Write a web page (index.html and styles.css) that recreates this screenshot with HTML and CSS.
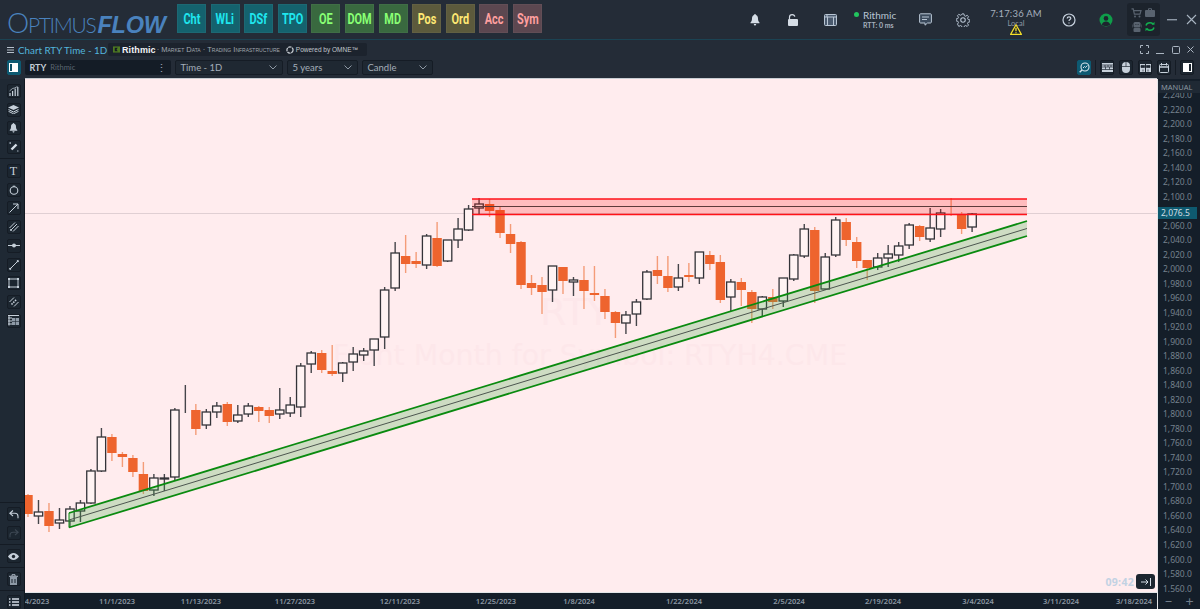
FILE: index.html
```html
<!DOCTYPE html>
<html lang="en">
<head>
  <meta charset="UTF-8" />
  <title>OptimusFlow - Chart RTY</title>
  <link rel="stylesheet" href="styles.css">
</head>
<body>
  <svg class="sprites" width="0" height="0">
    <symbol id="i-cog" viewBox="0 0 16 16">
      <circle cx="8" cy="8" r="2.6" fill="none" stroke="currentColor" stroke-width="1.2"/>
      <path d="M6.9 1h2.2l.4 2 1.5.7 1.8-1.1 1.5 1.6-1.1 1.7.7 1.6 2 .4v2.2l-2 .4-.7 1.6 1.1 1.7-1.5 1.6-1.8-1.1-1.5.7-.4 2H6.900l-.4-2-1.500-.7-1.800 1.100L1.700 12.700l1.100-1.700-.7-1.600-2-.4V6.800l2-.4.7-1.600-1.100-1.700 1.500-1.600 1.800 1.100 1.500-.7z" fill="none" stroke="currentColor" stroke-width="1.100"/>
    </symbol>
  </svg>

  <header class="topbar">
    <div class="logo"><span class="logo-thin"><span class="logo-o">O</span>PTIMUS</span><span class="logo-bold">FLOW</span></div>
    <nav class="modules">
      <a class="mod mod-teal"><span>Cht</span></a>
      <a class="mod mod-teal"><span>WLi</span></a>
      <a class="mod mod-teal"><span>DSf</span></a>
      <a class="mod mod-teal"><span>TPO</span></a>
      <a class="mod mod-green"><span>OE</span></a>
      <a class="mod mod-green"><span>DOM</span></a>
      <a class="mod mod-green"><span>MD</span></a>
      <a class="mod mod-yellow"><span>Pos</span></a>
      <a class="mod mod-yellow"><span>Ord</span></a>
      <a class="mod mod-red"><span>Acc</span></a>
      <a class="mod mod-red"><span>Sym</span></a>
    </nav>
    <div class="status">
      <div class="stat">
        <svg width="10" height="12" viewBox="0 0 10 12"><path d="M5 0c.6 0 .9.400.9 1C7.600 1.500 8 3 8 4.500c0 2 .6 3.200 1.500 4v.8h-9v-.8C1.400 7.700 2 6.500 2 4.500 2 3 2.400 1.500 4.100 1c0-.6.300-1 .9-1zM3.800 10h2.400c0 .8-.5 1.500-1.200 1.500S3.800 10.800 3.800 10z" fill="#d5dde6"/></svg>
      </div>
      <div class="stat">
        <svg width="12" height="12" viewBox="0 0 12 12"><path d="M2.500 5V3.200C2.500 1.500 3.800.6 5.200.6c1.300 0 2.400.8 2.600 2.100" fill="none" stroke="#d5dde6" stroke-width="1.200"/><rect x="1" y="5" width="10" height="7" rx="1" fill="#d5dde6"/></svg>
      </div>
      <div class="stat">
        <svg width="13" height="12" viewBox="0 0 13 12"><rect x=".5" y=".5" width="12" height="11" rx="1" fill="#4a5a6e" stroke="#b9c6d4"/><path d="M.5 3h12M3 .5V3M3.500 3v8.500M9.500 3v8.500" stroke="#b9c6d4" fill="none"/></svg>
      </div>
      <div class="stat stat-feed">
        <span class="feed-name"><i class="dot"></i>Rithmic</span>
        <span class="feed-rtt">RTT: 0 ms</span>
      </div>
      <div class="stat">
        <svg width="13" height="13" viewBox="0 0 13 13"><path d="M1.500.8h10c.5 0 .9.400.9.900v7.400c0 .5-.4.900-.9.900H8.500L6 12.200V10H1.500c-.5 0-.9-.4-.9-.9V1.700c0-.5.400-.9.900-.9z" fill="#3b4a5c" stroke="#b9c6d4"/><path d="M3 4h7M3 6.500h5" stroke="#b9c6d4"/></svg>
      </div>
      <div class="stat icon-cog">
        <svg width="14" height="14"><use href="#i-cog"/></svg>
      </div>
      <div class="stat stat-clock">
        <span class="clock-time">7:17:36 AM</span>
        <span class="clock-zone">Local</span>
        <svg class="clock-warn" width="12" height="11" viewBox="0 0 12 11"><path d="M6 .8l5.400 9.600H.6z" fill="#1d242e" stroke="#f5e02a" stroke-width="1.200" stroke-linejoin="round"/><path d="M6 3.800v3.500M6 8.200v1" stroke="#f5e02a" stroke-width="1.300"/></svg>
      </div>
      <div class="stat">
        <svg width="14" height="14" viewBox="0 0 14 14"><circle cx="7" cy="7" r="6" fill="none" stroke="#c7d2de" stroke-width="1.200"/><path d="M5.200 5.400c0-1 .8-1.600 1.800-1.600s1.800.6 1.800 1.500c0 1.300-1.800 1.300-1.800 2.800M7 9.400v1.100" fill="none" stroke="#c7d2de" stroke-width="1.200"/></svg>
      </div>
      <div class="stat">
        <svg width="14" height="14" viewBox="0 0 14 14"><circle cx="7" cy="7" r="6.500" fill="#0f9d4a"/><circle cx="7" cy="5.400" r="2.300" fill="#1d242e"/><path d="M2.800 11.400c.7-2 2.300-3 4.200-3s3.500 1 4.200 3c-1 1-2.600 1.600-4.200 1.600s-3.200-.6-4.200-1.600z" fill="#1d242e"/></svg>
      </div>
      <div class="tray">
        <svg width="11" height="10" viewBox="0 0 11 10"><path d="M.5.800h1.700l1.200 5.400h5.600l1-3.600H3" fill="none" stroke="#59636f" stroke-width="1.200"/><circle cx="4" cy="8.600" r="1" fill="#59636f"/><circle cx="8.500" cy="8.600" r="1" fill="#59636f"/></svg>
        <svg width="10" height="9" viewBox="0 0 10 9"><path d="M3.500 2V.7h3V2" fill="none" stroke="#59636f"/><rect y="2" width="10" height="7" rx="1" fill="#59636f"/></svg>
        <svg width="10" height="11" viewBox="0 0 10 11"><rect x="1.500" y="1" width="7" height="5.500" rx="1.500" fill="#59636f"/><rect x="1.500" y="7" width="7" height="4" rx="1" fill="#59636f"/><path d="M0 3.500v3M10 3.500v3" stroke="#59636f"/><path d="M3.500 3.500h.8M5.700 3.500h.8" stroke="#1d242e"/></svg>
        <svg width="10" height="11" viewBox="0 0 10 11"><path d="M1 4.500C1.500 2.700 3 1.800 5 1.800c1.200 0 2.200.4 3 1.100M9 6.500C8.500 8.300 7 9.200 5 9.200c-1.200 0-2.200-.4-3-1.100" fill="none" stroke="#12b04f" stroke-width="1.400"/><path d="M9.500 .8v3H6.500zM.5 10.200v-3h3z" fill="#12b04f"/></svg>
      </div>
      <div class="win-btn">
        <svg width="10" height="2"><rect width="10" height="1.400" fill="#8d98a5"/></svg>
      </div>
      <div class="win-btn">
        <svg width="11" height="11" viewBox="0 0 11 11"><path d="M1 1l9 9M10 1l-9 9" stroke="#a9b5c2" stroke-width="1.100"/></svg>
      </div>
    </div>
  </header>

  <main class="panel">
    <div class="panel-title">
      <svg class="burger" width="7" height="6" viewBox="0 0 7 6"><path d="M0 .5h7M0 3h7M0 5.500h7" stroke="#b6c0cb"/></svg>
      <span class="title-text">Chart RTY Time - 1D</span>
      <div class="banner">
        <svg width="7" height="7" viewBox="0 0 8 7"><rect width="8" height="7" fill="#4e7a22"/><path d="M2 1.500h3.500L4 3.500l1.500 2H2z" fill="#141b23"/></svg>
        <span class="banner-name">Rithmic</span>
        <span class="banner-tag">· Market Data · Trading Infrastructure</span>
        <svg class="banner-ring" width="8" height="8" viewBox="0 0 7 7"><circle cx="3.500" cy="3.500" r="2.700" fill="none" stroke="#c9ced4" stroke-width="1.100" stroke-dasharray="3 .6"/></svg>
        <span class="banner-omne">Powered by OMNE™</span>
      </div>
      <div class="panel-win">
        <svg width="9" height="9" viewBox="0 0 9 9"><path d="M.5 3V.5H3M6 .5h2.500V3M8.500 6v2.500H6M3 8.500H.5V6" fill="none" stroke="#aab5c1"/></svg>
        <svg width="8" height="9" viewBox="0 0 8 9"><path d="M0 8.500h8" stroke="#aab5c1"/></svg>
        <svg width="8" height="8" viewBox="0 0 8 8"><rect x=".5" y=".5" width="7" height="7" rx="1" fill="none" stroke="#aab5c1"/></svg>
        <svg width="7" height="7" viewBox="0 0 7 7"><path d="M.5.500l6 6M6.500.500l-6 6" stroke="#aab5c1"/></svg>
      </div>
    </div>

    <div class="toolbar">
      <button class="tool tool-active side-toggle"><svg width="9" height="9" viewBox="0 0 9 9"><rect x=".5" y=".5" width="8" height="8" fill="#0d4f66" stroke="#fff"/><rect x="3" y="1" width="5" height="7" fill="#fff"/></svg></button>
      <div class="symbol"><b>RTY</b><span>Rithmic</span><em>⋮</em></div>
      <div class="select select-time">Time - 1D<svg width="8" height="5" viewBox="0 0 8 5"><path d="M.5.500L4 4 7.500.500" fill="none" stroke="#8e99a5"/></svg></div>
      <div class="select select-range">5 years<svg width="8" height="5" viewBox="0 0 8 5"><path d="M.5.500L4 4 7.500.500" fill="none" stroke="#8e99a5"/></svg></div>
      <div class="select select-type">Candle<svg width="8" height="5" viewBox="0 0 8 5"><path d="M.5.500L4 4 7.500.500" fill="none" stroke="#8e99a5"/></svg></div>
      <div class="toolbar-right">
        <button class="tool tool-active"><svg width="11" height="11" viewBox="0 0 11 11"><circle cx="6" cy="5" r="4" fill="none" stroke="#d9e4ec" stroke-width="1.100"/><path d="M3 8L.7 10.300" stroke="#d9e4ec" stroke-width="1.400"/><path d="M4 6l1.500-1.500 1 1L8.300 3.500" fill="none" stroke="#d9e4ec"/></svg></button>
        <span class="tool-sep"></span>
        <button class="tool"><svg width="11" height="9" viewBox="0 0 11 9"><rect width="11" height="9" fill="#c6d0da"/><path d="M0 2h11M0 4h11M0 6.500h11M3 2v2M6 2v2M9 2v2M3.500 4v2.500M7.500 4v2.500" stroke="#1d2630" stroke-width=".7"/></svg></button>
        <button class="tool"><svg width="8" height="11" viewBox="0 0 8 11"><rect width="8" height="11" rx="4" fill="#c6d0da"/><path d="M0 4.500h8M4 0v4.500" stroke="#1d2630" stroke-width=".7"/></svg></button>
        <button class="tool"><svg width="11" height="8" viewBox="0 0 11 8"><rect width="11" height="8" fill="#c6d0da"/><path d="M1 1.500h3.500v2H1zM6.500 1.500H10v2H6.500zM3 5.500v2M8 5.500v2" stroke="#1d2630" fill="#1d2630" stroke-width=".7"/><path d="M5.500 0v8" stroke="#1d2630"/></svg></button>
        <button class="tool"><svg width="10" height="10" viewBox="0 0 10 10"><rect x=".5" y="1.500" width="9" height="8" rx="1" fill="none" stroke="#c6d0da"/><path d="M.5 4h9" stroke="#c6d0da" stroke-width="1.500"/><path d="M2.500 0v2.500M7.500 0v2.500" stroke="#c6d0da"/></svg></button>
        <span class="tool-sep"></span>
        <button class="tool"><svg width="9" height="9" viewBox="0 0 9 9"><rect x=".5" y=".5" width="8" height="8" fill="none" stroke="#fff"/><rect x="1" y="1" width="5" height="7" fill="#fff"/></svg></button>
      </div>
    </div>

    <div class="workspace">
      <aside class="sidebar">
        <div class="side-group">
          <button class="tool"><svg width="10" height="10" viewBox="0 0 10 10"><path d="M1 10V7M3.600 10V5M6.200 10V2.500M8.800 10V1" stroke="#c6d0da" stroke-width="1.200"/><path d="M.5 5l3-2.500 2-.5 3-1.500" fill="none" stroke="#c6d0da" stroke-width=".7"/></svg></button>
          <button class="tool"><svg width="11" height="9" viewBox="0 0 11 9"><path d="M5.500 0L11 2.500 5.500 5 0 2.500z" fill="#c6d0da"/><path d="M.5 4.500L5.500 7l5-2.500M.5 6.300L5.500 8.800l5-2.500" fill="none" stroke="#c6d0da"/></svg></button>
          <button class="tool"><svg width="9" height="10" viewBox="0 0 10 12"><path d="M5 0c.6 0 .9.400.9 1C7.600 1.500 8 3 8 4.500c0 2 .6 3.200 1.500 4v.8h-9v-.8C1.400 7.700 2 6.500 2 4.500 2 3 2.400 1.500 4.100 1c0-.6.300-1 .9-1zM3.800 10h2.400c0 .8-.5 1.500-1.200 1.500S3.800 10.800 3.800 10z" fill="#c6d0da"/></svg></button>
          <button class="tool"><svg width="10" height="10" viewBox="0 0 10 10"><path d="M2.500 7.500L7.500 2.500" stroke="#d5dde6" stroke-width="2.400"/><path d="M.5 1h1.500M1.200.3v1.500M8 9h1.500" stroke="#aab5c1"/></svg></button>
        </div>
        <div class="side-group side-draw">
          <button class="tool"><span class="tool-t">T</span></button>
          <button class="tool"><svg width="10" height="10" viewBox="0 0 10 10"><circle cx="5" cy="5.500" r="3.800" fill="none" stroke="#c6d0da" stroke-width="1.100"/><path d="M3.800 1.200h2.400" stroke="#c6d0da"/></svg></button>
          <button class="tool"><svg width="10" height="10" viewBox="0 0 10 10"><path d="M.5 9.500L9 1M4 1h5v5" fill="none" stroke="#c6d0da"/></svg></button>
          <button class="tool"><svg width="10" height="10" viewBox="0 0 10 10"><path d="M.5 6L6 .5M2 8L8 2M4 9.500L9.500 4" stroke="#c6d0da"/><circle cx="2" cy="8" r="1" fill="#c6d0da"/></svg></button>
          <button class="tool"><svg width="12" height="5" viewBox="0 0 12 5"><path d="M0 2.500h12" stroke="#c6d0da"/><circle cx="6" cy="2.500" r="2" fill="#c6d0da"/></svg></button>
          <button class="tool"><svg width="10" height="10" viewBox="0 0 10 10"><path d="M1 9l8-8" stroke="#c6d0da"/><circle cx="1.200" cy="8.800" r="1.100" fill="#c6d0da"/><circle cx="8.800" cy="1.200" r="1.100" fill="#c6d0da"/></svg></button>
          <button class="tool"><svg width="11" height="10" viewBox="0 0 11 10"><rect x="1" y="1" width="9" height="8" fill="none" stroke="#c6d0da"/><path d="M0 0h2v2H0zM9 0h2v2H9zM0 8h2v2H0zM9 8h2v2H9z" fill="#c6d0da"/></svg></button>
          <button class="tool"><svg width="10" height="10" viewBox="0 0 10 10"><path d="M.5 5L5 .5M5 9.500L9.500 5" stroke="#c6d0da"/><path d="M2.500 7.500L7.500 2.500" stroke="#c6d0da" stroke-width="1.600" stroke-dasharray="1.500 1"/></svg></button>
          <button class="tool"><svg width="11" height="11" viewBox="0 0 11 11"><path d="M1 .5v10M0 .5h11M0 3h4M0 6h4M0 9h4" stroke="#c6d0da"/><rect x="4" y="3" width="7" height="7" fill="#8e9aa7"/><path d="M4 6.500h7M7.500 3v7" stroke="#1d2630" stroke-width=".6"/></svg></button>
        </div>
        <div class="side-bottom">
          <div class="side-cell side-pair">
            <button class="tool"><svg width="10" height="9" viewBox="0 0 10 9"><path d="M4 .5L.8 3.300 4 6M1 3.300h5c2 0 3 1.300 3 3v2" fill="none" stroke="#c6d0da" stroke-width="1.100"/></svg></button>
            <button class="tool tool-off"><svg width="10" height="9" viewBox="0 0 10 9"><path d="M6 .5l3.200 2.800L6 6M9 3.300H4c-2 0-3 1.300-3 3v2" fill="none" stroke="#444f5b" stroke-width="1.100"/></svg></button>
          </div>
          <div class="side-cell">
            <button class="tool"><svg width="11" height="7" viewBox="0 0 11 7"><path d="M0 3.500C1.500 1.200 3.400 0 5.500 0S9.500 1.200 11 3.500C9.500 5.800 7.600 7 5.500 7S1.500 5.800 0 3.500z" fill="#c6d0da"/><circle cx="5.500" cy="3.500" r="1.700" fill="#1d2630"/></svg></button>
          </div>
          <div class="side-cell">
            <button class="tool"><svg width="9" height="11" viewBox="0 0 9 11"><path d="M3 2V.7h3V2M0 2.300h9" fill="none" stroke="#aab5c1"/><rect x="1" y="3" width="7" height="8" fill="#8e9aa7"/><path d="M3 5v4M6 5v4" stroke="#1d2630"/></svg></button>
          </div>
          <div class="side-cell side-last">
            <button class="tool"><svg width="10" height="8" viewBox="0 0 10 8"><path d="M0 1h1.500M3 1h7M0 4h1.500M3 4h7M0 7h1.500M3 7h7" stroke="#d5dde6" stroke-width="1.300"/></svg></button>
          </div>
        </div>
      </aside>

      <section class="chart-wrap">
        <div class="chart">
          <svg id="plot" class="plot" viewBox="25 79 1132 513"></svg>
          <span class="chart-time">09:42</span>
          <button class="chart-jump"><svg width="10" height="8" viewBox="0 0 10 8"><path d="M0 4h6.500M4.500 1.500L7 4 4.500 6.500M9.500 0v8" fill="none" stroke="#d5dde6"/></svg></button>
        </div>
        <svg id="dates" class="dates" viewBox="25 593 1132 16"></svg>
      </section>

      <aside class="axis">
        <span class="axis-mode">MANUAL</span>
        <div id="prices" class="axis-prices"></div>
        <span class="last-price">2,076.5</span>
        <div class="axis-zoom"><i>−</i><i>+</i></div>
      </aside>
    </div>
  </main>

  <script src="chart.js"></script>
</body>
</html>
```

FILE: styles.css
```css
* {
  margin: 0;
  padding: 0;
  box-sizing: border-box;
}

html, body {
  height: 100%;
}

body {
  background: #242c37;
  color: #aab4bf;
  font-family: 'Lato', sans-serif;
  overflow: hidden;
  display: flex;
  flex-direction: column;
}

.sprites {
  position: absolute;
}

button {
  border: none;
  background: none;
}

svg {
  flex-shrink: 0;
}

/* top bar */
.topbar {
  height: 39px;
  display: flex;
  align-items: flex-start;
  flex-shrink: 0;
}

.logo {
  width: 177px;
  height: 38px;
  padding: 5px 0 0 7px;
  color: #4a82bd;
  white-space: nowrap;
  display: flex;
  align-items: baseline;
}

.logo-thin {
  font-family: 'Lato', sans-serif;
  font-weight: 300;
  font-size: 21px;
  letter-spacing: -1.3px;
  margin-right: 2px;
}

.logo-o {
  font-size: 28px;
}

.logo-bold {
  font-family: 'Liberation Sans', sans-serif;
  font-weight: 700;
  font-style: italic;
  font-size: 23.5px;
  letter-spacing: -.2px;
}

.modules {
  display: flex;
  gap: 4.6px;
  padding-top: 4px;
}

.mod {
  width: 29px;
  height: 29px;
  display: flex;
  align-items: center;
  justify-content: center;
  font-family: 'Roboto', sans-serif;
  font-weight: 700;
  font-size: 14px;
  box-shadow: inset 0 0 0 1px rgba(255, 255, 255, .04);
}

.mod span {
  display: inline-block;
  transform: scaleX(.78);
}

.mod-teal { background: #14626e; color: #1fe6ee; }
.mod-green { background: #39693f; color: #88ff74; }
.mod-yellow { background: #5c5a3c; color: #ffe873; }
.mod-red { background: #5c4750; color: #ff9f9f; }

.status {
  margin-left: auto;
  display: flex;
  align-items: center;
  height: 39px;
}

.stat {
  width: 37.5px;
  height: 39px;
  display: flex;
  align-items: center;
  justify-content: center;
}

.stat-feed {
  width: 58px;
  flex-direction: column;
  align-items: flex-start;
  padding: 0 0 0 5px;
}

.dot {
  display: inline-block;
  width: 5px;
  height: 5px;
  margin-right: 4px;
  border-radius: 50%;
  background: #22c55e;
  vertical-align: 2px;
}

.feed-name {
  font-size: 10px;
  line-height: 11px;
  color: #b9c6d4;
}

.feed-rtt {
  font-size: 7px;
  font-weight: 700;
  line-height: 9px;
  padding-left: 9px;
  color: #a4b0bd;
}

.icon-cog {
  color: #b9c6d4;
}

.stat-clock {
  width: 68px;
  position: relative;
  flex-direction: column;
  justify-content: flex-start;
  padding-top: 8px;
}

.clock-time {
  font-size: 9.500px;
  line-height: 12px;
  letter-spacing: .2px;
  color: #a4b0bd;
}

.clock-zone {
  font-size: 7.500px;
  line-height: 8px;
  color: #8e99a5;
}

.clock-warn {
  position: absolute;
  left: 28px;
  top: 24px;
}

.tray {
  width: 33px;
  height: 33px;
  margin: 0 2px;
  padding: 3px;
  border-radius: 3px;
  background: #1c232c;
  display: grid;
  grid-template-columns: 1fr 1fr;
  place-items: center;
}

.win-btn {
  width: 20px;
  height: 39px;
  display: flex;
  align-items: center;
  justify-content: center;
}

.win-btn:last-child {
  width: 18px;
}

/* chart panel */
.panel {
  flex: 1;
  min-height: 0;
  display: flex;
  flex-direction: column;
  border-top: 1px solid #1b4353;
}

.panel-title {
  height: 19px;
  display: flex;
  align-items: center;
  flex-shrink: 0;
  padding-left: 7px;
}

.burger {
  margin-right: 4px;
}

.title-text {
  width: 90px;
  font-size: 9.800px;
  color: #53b5dc;
  white-space: nowrap;
}

.banner {
  height: 13px;
  width: 259px;
  padding-left: 5px;
  background: #1c232d;
  border-radius: 2px;
  display: flex;
  align-items: center;
  white-space: nowrap;
  font-family: 'Liberation Sans', sans-serif;
}

.banner-name {
  margin-left: 2px;
  font-size: 9px;
  font-weight: 700;
  letter-spacing: .1px;
  color: #f2f4f6;
}

.banner-tag {
  font-variant: small-caps;
  font-size: 7.500px;
  color: #a1a8b0;
  margin-left: 1px;
}

.banner-ring {
  margin-left: 6px;
}

.banner-omne {
  margin-left: 2px;
  font-size: 6.500px;
  color: #c2c7cd;
}

.panel-win {
  margin-left: auto;
  width: 60px;
  padding-right: 6px;
  display: flex;
  align-items: center;
  justify-content: space-between;
}

.toolbar {
  height: 20px;
  display: flex;
  align-items: flex-start;
  flex-shrink: 0;
  padding: 1px 6px 0 6.500px;
}

.tool {
  width: 14px;
  height: 15px;
  border-radius: 2px;
  background: #1c2630;
  border: 1px solid #151c25;
  display: flex;
  align-items: center;
  justify-content: center;
  flex-shrink: 0;
}

.tool-active {
  background: #0d5a72;
  border-color: #0d5a72;
}

.tool-off svg {
  opacity: .8;
}

.tool-t {
  font-family: 'Liberation Serif', serif;
  font-size: 12px;
  line-height: 1;
  color: #c6d0da;
}

.symbol {
  width: 146px;
  height: 15px;
  margin-left: 4px;
  padding: 0 4px 0 5px;
  background: #141c26;
  border-radius: 2px;
  display: flex;
  align-items: center;
  font-size: 7.500px;
  color: #5d6873;
}

.symbol b {
  font-size: 9px;
  color: #c3ccd5;
  margin-right: 4px;
}

.symbol em {
  margin-left: auto;
  font-style: normal;
  font-size: 11px;
  color: #9aa5b1;
}

.select {
  height: 15px;
  margin-left: 4px;
  padding: 0 5px;
  background: #1f2832;
  border: 1px solid #151c25;
  border-radius: 2px;
  display: flex;
  align-items: center;
  justify-content: space-between;
  font-size: 9.500px;
  color: #a4aeb9;
}

.select-time { width: 108px; }
.select-range { width: 71px; }
.select-type { width: 71px; }

.toolbar-right {
  margin-left: auto;
  display: flex;
  gap: 5px;
  align-items: center;
}

.tool-sep {
  width: 1px;
  height: 15px;
  margin: 0 -1px;
  background: #151c25;
}

.workspace {
  flex: 1;
  min-height: 0;
  display: flex;
}

.sidebar {
  width: 25px;
  flex-shrink: 0;
  background: #1f2934;
  display: flex;
  flex-direction: column;
  border-right: 1px solid #111820;
}

.side-group {
  display: flex;
  flex-direction: column;
  gap: 4.700px;
  padding: 5px 0 0 6.500px;
}

.sidebar .tool {
  height: 14px;
}

.side-draw {
  margin-top: 4px;
  padding-top: 5px;
  border-top: 1px solid #141b24;
}

.side-bottom {
  margin-top: auto;
  display: flex;
  flex-direction: column;
}

.side-cell {
  padding: 4px 0 4px 6.500px;
  border-top: 1px solid #141b24;
  height: 23px;
}

.side-pair {
  height: 42px;
  display: flex;
  flex-direction: column;
  gap: 5px;
}

.side-last {
  height: 19px;
}

.chart-wrap {
  flex: 1;
  min-width: 0;
  display: flex;
  flex-direction: column;
}

.chart {
  position: relative;
  height: 513px;
  background: #ffecee;
  box-shadow: 0 -1px 0 #c9ced3;
  flex-shrink: 0;
}

.plot {
  display: block;
  width: 1132px;
  height: 513px;
}

.watermark {
  font-family: 'DejaVu Sans', sans-serif;
  fill: #fde7ea;
}

.chart-time {
  position: absolute;
  right: 23px;
  bottom: 3px;
  font-family: 'Open Sans', sans-serif;
  font-size: 10.500px;
  font-weight: 700;
  letter-spacing: .3px;
  color: #c2d2e3;
}

.chart-jump {
  position: absolute;
  right: 2px;
  bottom: 3px;
  width: 19px;
  height: 15px;
  border-radius: 3px;
  background: #1c2630;
  display: flex;
  align-items: center;
  justify-content: center;
}

.dates {
  display: block;
  width: 1132px;
  height: 17px;
  background: #141e29;
  border-top: 1px solid #e4e6e8;
}

.date-label {
  font-family: 'Noto Sans', sans-serif;
  font-size: 7.500px;
  font-weight: 600;
  fill: #8b96a1;
}

.axis {
  width: 43px;
  flex-shrink: 0;
  position: relative;
  background: #141e29;
  border-left: 1px solid #e4e6e8;
  overflow: hidden;
}

.axis-mode {
  position: absolute;
  top: 2px;
  left: 0;
  right: 0;
  z-index: 1;
  padding-left: 3px;
  font-family: 'Noto Sans', sans-serif;
  font-size: 7.500px;
  line-height: 12px;
  color: #8b96a1;
  background: #1f2934;
}

.axis-prices {
  padding: 9px 0 0 5px;
}

.axis-prices span {
  display: block;
  height: 14.530px;
  line-height: 14.530px;
  font-family: 'Noto Sans', sans-serif;
  font-size: 8.500px;
  color: #75818d;
  white-space: nowrap;
}

.last-price {
  position: absolute;
  top: 128px;
  left: 0;
  width: 39px;
  height: 12px;
  padding-left: 3px;
  line-height: 12px;
  font-family: 'Noto Sans', sans-serif;
  font-size: 8.500px;
  color: #d0dde4;
  background: #0e5a70;
}

.axis-zoom {
  position: absolute;
  left: 0;
  right: 0;
  bottom: 0;
  height: 17px;
  background: #141e29;
  display: flex;
  justify-content: space-around;
  align-items: center;
}

.axis-zoom i {
  font-style: normal;
  font-size: 14px;
  line-height: 1;
  color: #727e8a;
}
```

FILE: chart.js
```js
// type, high, body top, body bottom, low (page y coordinates)
var candles = [
  ["d",494,495,514,517],["u",500,512,516,524],["d",503,511,526,532],["u",508,520,523,529],["u",506,509,521,527],
  ["u",500,503,511,522],["u",469,471,503,504],["u",428,437,471,472],["d",434,437,453,461],["d",452,454,457,467],
  ["d",455,458,472,477],["d",462,474,491,494],["u",474,478,490,496],["u",474,478,479,491],["u",408,410,477,481],
  ["u",385,399,399.500,413],["d",404,410,429,435],["u",409,412,425,429],["u",402,406,412,418],["d",402,404,422,426],
  ["u",405,415,421,423],["u",403,406,414,417],["d",406,407,411,422],["d",407,410,416,423],["u",388,410,414,419],
  ["u",397,405,413,417],["u",363,366,407,417],["u",351,353,364,373],["d",350,353,370,373],["d",345,371,374,376],
  ["u",362,363,373,382],["u",347,354,362,371],["u",348,351,355,361],["u",339,339,350,366],["u",287,290,337,349],
  ["u",242,253,288,291],["d",235,256,264,273],["d",252,261,264,268],["u",234,236,265,269],["d",222,238,266,267],
  ["u",240,240,261,262],["u",218,229,240,248],["u",205,209,230,231],["u",198,204,208,215],["d",199,204,211,217],
  ["d",207,210,233,238],["d",224,234,244,253],["d",241,242,285,289],["d",275,283,288,295],["d",277,285,292,314],
  ["u",266,266,290,302],["d",267,267,281,294],["u",277,280,282,296],["d",266,280,291,309],["d",266,293,295,301],
  ["d",289,296,312,319],["d",311,312,323,338],["u",311,315,323,334],["u",299,302,314,326],["u",270,272,299,300],
  ["d",256,270,276,284],["d",256,276,288,292],["u",264,278,287,291],["d",263,275,277,282],["u",252,252,278,284],
  ["d",251,255,264,270],["d",255,262,300,303],["u",279,282,297,311],["d",278,282,290,306],["d",290,292,309,323],
  ["u",296,297,309,316],["d",289,297,302,309],["u",278,278,301,307],["u",254,255,279,281],["u",224,229,256,258],
  ["d",227,230,291,303],["u",253,257,289,290],["u",217,220,255,257],["d",218,222,240,246],["d",237,242,261,268],
  ["d",260,260,268,280],["u",253,258,267,270],["u",245,254,258,267],["u",242,246,255,262],["u",223,225,245,249],
  ["d",225,226,237,241],["u",208,228,239,242],["u",209,213,229,237],["d",198,214,214.500,216],["d",212,215,229,234],
  ["u",213,214,227,232]
];

var NS = "http://www.w3.org/2000/svg";
var plot = document.getElementById("plot");

function el(parent, tag, attrs, text) {
  var node = document.createElementNS(NS, tag);
  for (var k in attrs) node.setAttribute(k, attrs[k]);
  if (text) node.textContent = text;
  parent.appendChild(node);
  return node;
}

function line(x1, y1, x2, y2, color, w) {
  el(plot, "line", { x1: x1, y1: y1, x2: x2, y2: y2, stroke: color, "stroke-width": w });
}

// faint symbol watermark
el(plot, "text", { class: "watermark", x: 575, y: 325, "font-size": 38, "text-anchor": "middle" }, "RTY");
el(plot, "text", { class: "watermark", x: 590, y: 365, "font-size": 28.400, "text-anchor": "middle" }, "Front Month for Symbol: RTYH4.CME");

// last price line
line(25, 213.500, 1157, 213.500, "#e0cfd3", 1);

candles.forEach(function (c, i) {
  var x = 28 + i * 10.49;
  if (c[0] === "d") {
    line(x, c[1], x, c[4], "#f49c78", 1.400);
    el(plot, "rect", { x: x - 4.700, y: c[2], width: 9.400, height: Math.max(c[3] - c[2], 1), fill: "#ee642e" });
  } else {
    line(x, c[1], x, c[4], "#45454a", 1.400);
    if (c[3] - c[2] > 0.6) {
      el(plot, "rect", { x: x - 4.200, y: c[2], width: 8.400, height: c[3] - c[2], fill: "#fff3f3", stroke: "#333338", "stroke-width": 1.300 });
    }
  }
});

// resistance channel
el(plot, "rect", { x: 472, y: 199, width: 555, height: 15.500, fill: "rgba(255,0,0,.2)" });
line(472, 199, 1027, 199, "#ff1218", 1.500);
line(472, 214.500, 1027, 214.500, "#ff1218", 1.500);
line(472, 206.500, 1027, 206.500, "#5c3a3a", 1);

// support channel
el(plot, "polygon", { points: "69,513 1027,221 1027,236 69,527.500", fill: "rgba(60,171,67,.25)" });
line(69, 513, 1027, 221, "#0a8a0f", 1.800);
line(69, 520, 1027, 228.500, "#4d5650", 1);
line(69, 527.500, 1027, 236, "#0a8a0f", 1.800);
line(69, 513, 69, 527.500, "#0a8a0f", 1);

// price scale, 2,080.0 sits under the last price tag so it stays blank
var prices = document.getElementById("prices");
for (var p = 2240; p >= 1560; p -= 20) {
  var s = document.createElement("span");
  if (p !== 2080) s.textContent = p.toString().replace(/(\d)(\d{3})/, "$1,$2") + ".0";
  prices.appendChild(s);
}

// time scale
var dates = document.getElementById("dates");
[[37,"4/2023"],[117,"11/1/2023"],[201,"11/13/2023"],[295,"11/27/2023"],[400,"12/11/2023"],[496,"12/25/2023"],
 [579,"1/8/2024"],[684,"1/22/2024"],[789,"2/5/2024"],[883,"2/19/2024"],[978,"3/4/2024"],[1061,"3/11/2024"],[1134,"3/18/2024"]
].forEach(function (d) {
  el(dates, "text", { class: "date-label", x: d[0], y: 604, "text-anchor": "middle" }, d[1]);
});
```
